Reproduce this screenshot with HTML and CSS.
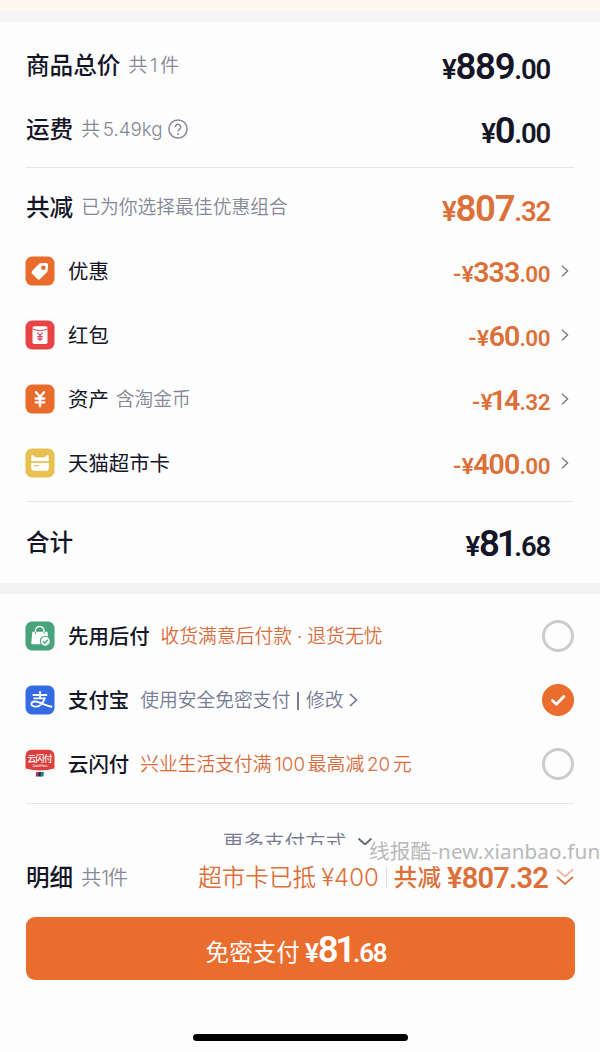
FILE: index.html
```html
<!DOCTYPE html>
<html lang="zh-CN">
<head>
<meta charset="utf-8">
<title>确认订单</title>
<link rel="stylesheet" href="styles.css">
</head>
<body>
<div class="page">
  <div class="notice"></div>
  <div class="gap"></div>
  <section class="summary">
    <div class="row"><b class="head">商品总价</b><span class="sub">共<i class="n">1</i>件</span><span class="price big">¥<strong>889</strong>.00</span></div>
    <div class="row"><b class="head">运费</b><span class="sub">共<i class="n kg">5.49kg</i></span>
      <svg class="help" viewBox="0 0 20 20"><circle cx="10" cy="10" r="9.1"/><path d="M7.3 8a2.7 2.7 0 1 1 4.3 2.2c-1.1.8-1.5 1.2-1.5 2.3"/><circle class="dot" cx="10.1" cy="15" r="1"/></svg>
      <span class="price big">¥<strong>0</strong>.00</span></div>
    <div class="line first"></div>
    <div class="row total-off"><b class="head">共减</b><span class="sub">已为你选择最佳优惠组合</span><span class="price big orange">¥<strong>807</strong>.32</span></div>
    <div class="row item">
      <svg class="icon" viewBox="0 0 30 30"><rect x=".5" y=".5" width="29" height="29" rx="6.5" fill="#e96c2c"/><path d="M15.2 7.3 21.3 7q1.700 0 1.700 1.700l-.3 6.100q0 .7-.6 1.300l-7 7q-1.300 1.200-2.600 0l-5.400-5.400q-1.200-1.300 0-2.600l6.800-7.100q.6-.7 1.300-.7Z" fill="#fff"/><circle cx="18.300" cy="11.700" r="2.300" fill="#e96c2c"/></svg>
      <span class="name">优惠</span><span class="price orange"><em>-</em>¥<strong>333</strong>.00</span><svg class="arrow" viewBox="0 0 8 12"><path d="m1 .8 5.600 5.200L1 11.200"/></svg></div>
    <div class="row item">
      <svg class="icon" viewBox="0 0 30 30"><rect x=".5" y=".5" width="29" height="29" rx="6.500" fill="#e74345"/><rect x="7.500" y="6.300" width="15" height="17.700" rx="1.800" fill="#fff"/><path d="M7.500 8.900q7.500 3.200 15 0" fill="none" stroke="#d73c49" stroke-width="1"/><path d="m12.300 12.600 2.700 3 2.700-3M15 15.600v5.500m-2.800-4.500h5.600m-5.600 2.300h5.600" fill="none" stroke="#d94761" stroke-width="1.300"/></svg>
      <span class="name">红包</span><span class="price orange"><em>-</em>¥<strong>60</strong>.00</span><svg class="arrow" viewBox="0 0 8 12"><path d="m1 .8 5.600 5.200L1 11.200"/></svg></div>
    <div class="row item">
      <svg class="icon" viewBox="0 0 30 30"><rect x=".5" y=".5" width="29" height="29" rx="6.500" fill="#e96c2c"/><path d="m11 8.200 4 4.700 4-4.700M15 13v9.200m-4.200-7.700h8.400m-8.400 3.900h8.400" fill="none" stroke="#fff" stroke-width="2.400" stroke-linecap="round" stroke-linejoin="round"/></svg>
      <span class="name">资产</span><span class="sub">含淘金币</span><span class="price orange"><em>-</em>¥<strong class="lead-one">14</strong>.32</span><svg class="arrow" viewBox="0 0 8 12"><path d="m1 .8 5.600 5.200L1 11.200"/></svg></div>
    <div class="row item">
      <svg class="icon" viewBox="0 0 30 30"><rect x=".5" y=".5" width="29" height="29" rx="6.500" fill="#e9c151"/><path d="M6.200 13.200V8.400q0-2.200 1.600-1.200L10.400 9q.8.500 1.700.5h5.800q.9 0 1.700-.5l2.600-1.800q1.600-1 1.600 1.200v4.800ZM6.200 15h17.600v5.500q0 2.300-2.300 2.300h-13q-2.300 0-2.300-2.300Z" fill="#fff"/><path d="M9.500 17.700h4" stroke="#e9c151" stroke-width="1.200" stroke-linecap="round"/></svg>
      <span class="name">天猫超市卡</span><span class="price orange"><em>-</em>¥<strong>400</strong>.00</span><svg class="arrow" viewBox="0 0 8 12"><path d="m1 .8 5.600 5.200L1 11.200"/></svg></div>
    <div class="line second"></div>
    <div class="row sum"><span class="head">合计</span><span class="price big">¥<strong class="tail-one">81</strong>.68</span></div>
  </section>
  <div class="gap plain"></div>
  <section class="methods">
    <div class="row item">
      <svg class="icon" viewBox="0 0 30 30"><rect x=".5" y=".5" width="29" height="29" rx="6.500" fill="#48a37c"/><path d="M7.300 10.800h15.200l.9 11.400q0 1-1 1H7.400q-1.200 0-1.100-1.200Z" fill="#fff"/><path d="M10.400 11v-1.200a4 4 0 0 1 8.600 0V11" fill="none" stroke="#fff" stroke-width="1.300"/><path d="M10.400 10.900v2M19 10.900v2" stroke="#48a37c" stroke-width="1"/><circle cx="20.300" cy="20.200" r="5" fill="#fff" stroke="#48a37c" stroke-width="1.100"/><path d="m17.900 20.200 1.800 1.800 3.200-3.300" fill="none" stroke="#48a37c" stroke-width="1.300"/></svg>
      <b class="name">先用后付</b><span class="sub tip offer">收货满意后付款<i class="mid">·</i>退货无忧</span><span class="radio"></span></div>
    <div class="row item">
      <svg class="icon" viewBox="0 0 30 30"><rect x=".5" y=".5" width="29" height="29" rx="6.500" fill="#346be5"/><g fill="none" stroke="#fff" stroke-linecap="round"><path d="M8.300 10h13.200M15 6.800v6.400M9.200 13.300h10.600" stroke-width="1.800"/><path d="M19.700 13.300c-1.400 4.300-4.200 8.300-8.800 8.300-2.900 0-4.800-1.300-4.500-3 .4-2.500 4.300-2.800 8-1.100 4 1.600 7.400 3.400 12.100 4.300" stroke-width="1.900"/></g></svg>
      <b class="name">支付宝</b><span class="sub tip slate">使用安全免密支付<i class="bar"></i>修改</span><svg class="more-arrow" viewBox="0 0 9 14"><path d="m1 1 6.500 6L1 13"/></svg><span class="radio checked"><svg viewBox="0 0 32 32"><path d="m10.500 16.500 3.900 3.700 7.400-7.600"/></svg></span></div>
    <div class="row item">
      <svg class="icon" viewBox="0 0 30 30"><path d="M.5 19.500V7.200Q.5.700 7 .7h16q6.500 0 6.500 6.500v12.300Q15 23.500.5 19.500Z" fill="#dc3f3c"/><text class="quick" x="15" y="12.900" textLength="25">云闪付</text><text class="quick-en" x="15" y="17.800" textLength="15">QuickPass</text><path d="M11.300 23h3l-.7 4.500h-3Z" fill="#b73555"/><path d="M13.700 23h3l-.7 4.500h-3Z" fill="#252d4d"/><path d="M16 23h3l-.7 4.500h-3Z" fill="#247a7d"/></svg>
      <b class="name">云闪付</b><span class="sub tip offer">兴业生活支付满<i class="n">100</i>最高减<i class="n">20</i>元</span><span class="radio"></span></div>
    <div class="line third"></div>
    <div class="more"><span>更多支付方式</span><svg viewBox="0 0 16 10"><path d="m1.500 1.500 6.500 6 6.500-6"/></svg></div>
  </section>
  <footer class="footer">
    <div class="detail"><b class="head">明细</b><span class="count">共<i>1</i>件</span>
      <span class="saving">超市卡已抵<i class="amt">¥400</i></span><span class="sep"></span><b class="off">共减</b><strong class="offnum">¥807.32</strong>
      <svg class="double" viewBox="0 0 18 18"><path class="pale" d="m1 1.500 8 7 8-7"/><path d="m1 8.800 8 7.200 8-7.200"/></svg></div>
    <button class="pay"><span>免密支付</span><span class="price big">¥<strong class="tail-one">81</strong>.68</span></button>
    <div class="home"></div>
  </footer>
  <div class="watermark">线报酷-new.xianbao.fun</div>
</div>
</body>
</html>
```
FILE: styles.css
```css
* { box-sizing: border-box; }
body {
  margin: 0;
  background: #fdfdfd;
  color: #141526;
  font-family: Inter, "Noto Sans CJK SC", sans-serif;
}
i, em { font-style: normal; }
svg { display: block; flex: none; }
.page {
  position: relative;
  width: 600px;
  height: 1052px;
  overflow: hidden;
  display: flex;
  flex-direction: column;
  white-space: nowrap;
}
.notice { height: 11px; background: #fff8f1; }
.gap { height: 11px; background: #f4f4f7; }
.gap.plain { background: #f3f3f4; }
.summary { height: 561px; padding: 11px 26px 0; }
.methods { height: 251px; padding: 10px 26px 0; overflow: hidden; }
.row { height: 64px; display: flex; align-items: center; line-height: 30px; }
.head, .sub, .name { padding-top: 2px; }
.head { font-size: 23.6px; font-weight: 500; }
.sub { margin-left: 8px; font-size: 18.8px; color: #858896; font-weight: 350; }
.n { margin: 0 2.8px; letter-spacing: 0; }
.kg { margin-right: 0; }
.help { width: 20px; height: 20px; margin-left: 5px; fill: none; stroke: #858896; stroke-width: 1.5; }
.help .dot { fill: #858896; stroke: none; }
.line { height: 1px; background: #e5e5e8; }
.first { margin-top: 6px; }
.second { margin-top: 6px; }
.third { margin-top: 7px; }
.total-off { margin-top: 7px; }
.sum { margin-top: 8px; }
.icon { width: 30px; height: 30px; margin-left: -1px; }
.name { margin-left: 13px; font-size: 20.4px; font-weight: 400; }
.name + .sub:not(.tip) { margin-left: 7px; }
b.name { font-weight: 500; }
.price {
  margin-left: auto;
  margin-right: 24px;
  padding-top: 4px;
  font: 600 22.5px/30px Roboto, sans-serif;
  letter-spacing: -0.5px;
}
.price strong { font-size: 28.5px; font-weight: 600; letter-spacing: -0.9px; }
.price em { margin-right: 1px; }
.big { padding-top: 6px; font-size: 27.5px; letter-spacing: -1.2px; }
.big strong { font-size: 36.5px; letter-spacing: -1.2px; }
.price .lead-one { margin-left: -2px; letter-spacing: -2.5px; margin-right: 1.6px; }
.price .tail-one { letter-spacing: -3.2px; }
.orange { color: #dd6f38; }
.item .price { margin-right: 11px; }
.arrow { width: 8px; height: 12px; margin-right: 5px; fill: none; stroke: #747783; stroke-width: 1.3; }
.tip { margin-left: 11px; }
.offer { color: #d96c3c; }
.slate { color: #777b93; }
.mid { margin: 0 5px; }
.bar { display: inline-block; width: 1.5px; height: 18px; margin: 0 7px; background: #777b93; vertical-align: -3px; }
.more-arrow { width: 9px; height: 14px; margin-left: 6px; fill: none; stroke: #737789; stroke-width: 1.7; }
.radio { width: 32px; height: 32px; border: 3px solid #cbccd0; border-radius: 50%; margin-left: auto; }
.radio.checked { border: 0; background: #eb6c2c; }
.radio svg { width: 32px; height: 32px; fill: none; stroke: #fff; stroke-width: 2.8; stroke-linecap: round; stroke-linejoin: round; }
.quick { font: 500 8.800px "Noto Sans CJK SC", sans-serif; fill: #fff; text-anchor: middle; }
.quick-en { font: 3.500px Inter, sans-serif; fill: #fff; text-anchor: middle; }
.more { display: flex; justify-content: center; padding: 25px 4px 0 0; gap: 11px; font-size: 20.600px; line-height: 28px; font-weight: 350; color: #777b91; }
.more svg { width: 16px; height: 10px; margin-top: 8px; fill: none; stroke: #696d7d; stroke-width: 2; }
.footer { height: 207px; padding: 12px 26px 0; }
.detail { height: 40px; display: flex; align-items: center; line-height: 32px; color: #dd6f38; }
.detail .head { color: #141526; }
.count { margin-left: 8px; padding-top: 2px; font-size: 20px; color: #858896; font-weight: 350; }
.count i { letter-spacing: -1px; }
.saving { margin-left: auto; padding-top: 1px; font-size: 23.600px; font-weight: 350; }
.amt { margin-left: 5px; font-size: 24px; letter-spacing: 0; }
.sep { width: 1px; height: 20px; margin: 0 7px; background: #e8dedb; }
.off { padding-top: 2px; font-size: 23.600px; font-weight: 500; }
.offnum { margin-left: 6px; padding-top: 1px; font: 600 29px/32px Roboto, sans-serif; letter-spacing: -0.8px; }
.double { width: 18px; height: 18px; margin-left: 8px; fill: none; stroke: #dd7040; stroke-width: 1.700; }
.pale { stroke: #edbca5; }
.pay {
  width: 549px;
  height: 63px;
  margin-top: 20px;
  padding: 4px 9px 0 0;
  border: 0;
  border-radius: 9px;
  background: #eb6d2d;
  color: #fff;
  display: flex;
  justify-content: center;
  align-items: center;
  font: 400 23.600px/30px "Noto Sans CJK SC", sans-serif;
}
.pay .price { margin: 0 0 0 5px; padding: 2px 0 0; font-size: 26px; }
.home { width: 215px; height: 7px; margin: 54px auto 0; border-radius: 4px; background: #000; }
.watermark { position: absolute; left: 369px; top: 837px; font: 20.600px/28px "Noto Sans", "Noto Sans CJK SC", sans-serif; letter-spacing: 0.15px; color: #b8b8bb; }
```
